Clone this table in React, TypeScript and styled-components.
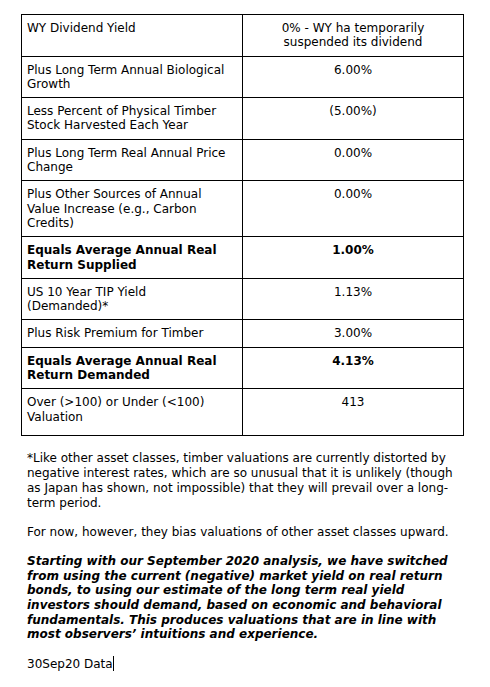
import React from 'react';
import styled, { createGlobalStyle } from 'styled-components';

type Row = {
    label: string,
    value: string,
    strong?: boolean,
}

const rows: Row[] = [
    { label: 'WY Dividend Yield', value: '0% - WY ha temporarily suspended its dividend' },
    { label: 'Plus Long Term Annual Biological Growth', value: '6.00%' },
    { label: 'Less Percent of Physical Timber Stock Harvested Each Year', value: '(5.00%)' },
    { label: 'Plus Long Term Real Annual Price Change', value: '0.00%' },
    { label: 'Plus Other Sources of Annual Value Increase (e.g., Carbon Credits)', value: '0.00%' },
    { label: 'Equals Average Annual Real Return Supplied', value: '1.00%', strong: true },
    { label: 'US 10 Year TIP Yield\n(Demanded)*', value: '1.13%' },
    { label: 'Plus Risk Premium for Timber', value: '3.00%' },
    { label: 'Equals Average Annual Real Return Demanded', value: '4.13%', strong: true },
    { label: 'Over (>100) or Under (<100) Valuation', value: '413' },
];

export default function App() {
    return (
        <>
            <GlobalStyle />
            <Page>
                <Table>
                    <tbody>
                        {rows.map((row, i) => (
                            <tr key={row.label}>
                                <LabelCell $strong={row.strong} $last={i === rows.length - 1}>{row.label}</LabelCell>
                                <ValueCell $strong={row.strong} $last={i === rows.length - 1}>{row.value}</ValueCell>
                            </tr>
                        ))}
                    </tbody>
                </Table>

                <Notes>
                    <Note>
                        *Like other asset classes, timber valuations are currently distorted by<br />
                        negative interest rates, which are so unusual that it is unlikely (though<br />
                        as Japan has shown, not impossible) that they will prevail over a long-<br />
                        term period.
                    </Note>
                    <Note>For now, however, they bias valuations of other asset classes upward.</Note>
                    <Emphasis>
                        Starting with our September 2020 analysis, we have switched<br />
                        from using the current (negative) market yield on real return<br />
                        bonds, to using our estimate of the long term real yield<br />
                        investors should demand, based on economic and behavioral<br />
                        fundamentals. This produces valuations that are in line with<br />
                        most observers’ intuitions and experience.
                    </Emphasis>
                    <Note>30Sep20 Data<Caret /></Note>
                </Notes>
            </Page>
        </>
    );
}

const GlobalStyle = createGlobalStyle`
    html, body {
        margin: 0;
        background: #fff;
    }
    body {
        font-family: "DejaVu Sans", Verdana, sans-serif;
        font-size: 12px;
        color: #000;
    }
`;

const Page = styled.div`
    display: flex;
    flex-direction: column;
    padding: 14px 0 0 21px;
`;

const Table = styled.table`
    width: 443px;
    border-collapse: collapse;
    table-layout: fixed;
    border: 1px solid #000;
`;

const Cell = styled.td<{ $strong?: boolean, $last?: boolean }>`
    border: 1px solid #000;
    padding: 6px 5px ${p => (p.$last ? '11px' : '6px')};
    vertical-align: top;
    line-height: 14.3px;
    white-space: pre-line;
    font-weight: ${p => (p.$strong ? 700 : 400)};
`;

const LabelCell = styled(Cell)`
    text-align: left;
`;

const ValueCell = styled(Cell)`
    text-align: center;
`;

const Notes = styled.div`
    display: flex;
    flex-direction: column;
    gap: 14px;
    margin-top: 15px;
    padding-left: 6px;
    width: 450px;
`;

const Note = styled.p`
    margin: 0;
    line-height: 15px;
    white-space: nowrap;
`;

const Emphasis = styled(Note)`
    font-weight: 700;
    font-style: italic;
    line-height: 14.7px;
`;

const Caret = styled.span`
    display: inline-block;
    width: 1px;
    height: 15px;
    background: #000;
    vertical-align: -3px;
`;
